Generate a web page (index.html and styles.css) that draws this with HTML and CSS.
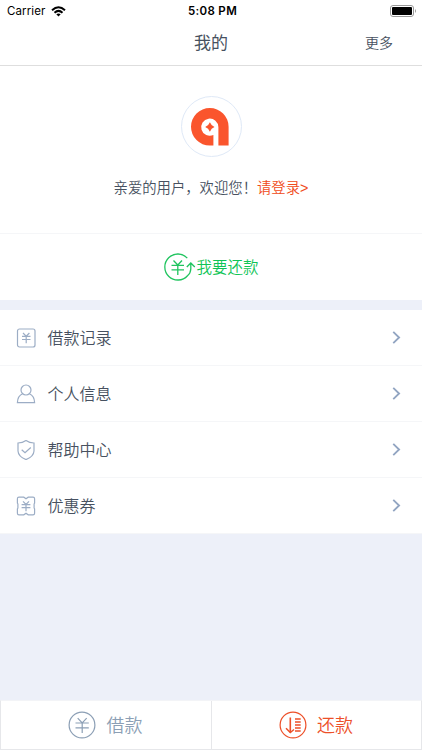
FILE: index.html
```html
<!DOCTYPE html>
<html lang="zh-CN">
<head>
<meta charset="utf-8">
<title>我的</title>
<link rel="stylesheet" href="styles.css">
</head>
<body>
<div class="app">
  <div class="status">
    <div class="carrier"><span>Carrier</span>
      <svg width="15" height="11" viewBox="0 0 15 11" fill="none" stroke="#000" stroke-width="2"><path d="M1 4.2Q7.5-1.6 14 4.2M3.5 6.7Q7.5 3.1 11.5 6.7"/><path d="M5.3 8.3Q7.5 6.6 9.7 8.3L7.5 10.6Z" fill="#000" stroke="none"/></svg>
    </div>
    <time>5:08 PM</time>
    <svg class="battery" width="27" height="12" viewBox="0 0 27 12"><rect x=".5" y=".5" width="23" height="11" rx="2.5" fill="#fff" stroke="#999"/><rect x="2" y="2" width="20" height="8" rx="1" fill="#000"/><path d="M25 4q2 2 0 4z" fill="#999"/></svg>
  </div>
  <header class="nav"><span></span><h1>我的</h1><a class="more">更多</a></header>
  <section class="profile">
    <div class="avatar">
      <svg width="38" height="38" viewBox="0 0 38 38"><path d="M18.8 0A18.8 18.8 0 0 0 18.8 37.6H22.4V27A8.6 8.6 0 1 1 27.4 19.2V37.6H37.6V18.8A18.8 18.8 0 0 0 18.8 0Z" fill="#fa552d"/><path d="M18.9 14.2Q20.2 17.6 23.5 19Q20.2 20.3 18.9 23.8Q17.6 20.3 14.2 19Q17.6 17.6 18.9 14.2Z" fill="#fa552d"/></svg>
    </div>
    <p class="greeting">亲爱的用户，欢迎您！<a>请登录&gt;</a></p>
  </section>
  <section class="repay">
    <svg width="32" height="28" viewBox="0 0 32 28" fill="none" stroke="#20c45f" stroke-width="1.3"><path d="M23.3 5.1A13 13 0 1 0 23.5 22.7Q26.5 20.5 26.8 16V10M22.8 14L26.8 10L30.8 14"/><path d="M9.5 7.5L13.8 12L18 7.5M7.5 12.3H20M7.5 16.8H20M13.8 12V22"/></svg>
    <span>我要还款</span>
  </section>
  <nav class="menu">
    <a class="row">
      <svg class="icon" viewBox="0 0 20 20"><rect x="1.5" y="1" width="17.5" height="18" rx="2"/><path d="M7 5L10.2 8.2L13.4 5M6 8.4H14.5M6 11.5H14.5M10.2 8.2V15.2"/></svg>
      <span>借款记录</span><svg class="chevron" viewBox="0 0 8 12"><path d="M1 .8L6.4 6L1 11.2"/></svg></a>
    <a class="row">
      <svg class="icon" viewBox="0 0 20 20"><circle cx="10" cy="6" r="5"/><path d="M6.6 9.7C3.4 11 1.6 14 1.4 18.6H18.6C18.4 14 16.6 11 13.4 9.7"/></svg>
      <span>个人信息</span><svg class="chevron" viewBox="0 0 8 12"><path d="M1 .8L6.4 6L1 11.2"/></svg></a>
    <a class="row">
      <svg class="icon" viewBox="0 0 20 20"><path d="M10 .5Q13.5 3 18 3V11Q17.7 16.5 10 19.6Q2.3 16.5 2 11V3Q6.5 3 10 .5ZM5.7 9.8L9 12.8L14.8 7.5"/></svg>
      <span>帮助中心</span><svg class="chevron" viewBox="0 0 8 12"><path d="M1 .8L6.4 6L1 11.2"/></svg></a>
    <a class="row">
      <svg class="icon" viewBox="0 0 20 20"><path d="M3 1.2H7.8L10 2.8L12.2 1.2H17Q18.6 1.2 18.6 2.8V7.2L18.1 8V12L18.6 12.8V17.2Q18.6 18.8 17 18.8H12.2L10 17.2L7.8 18.8H3Q1.4 18.8 1.4 17.2V12.8L1.9 12V8L1.4 7.2V2.8Q1.4 1.2 3 1.2Z"/><path d="M7 5.3L10 8.3L13 5.3M5.6 8.6H14.4M5.6 11.6H14.4M10 8.3V15.2"/></svg>
      <span>优惠券</span><svg class="chevron" viewBox="0 0 8 12"><path d="M1 .8L6.4 6L1 11.2"/></svg></a>
  </nav>
  <footer class="tabs">
    <a class="tab"><svg viewBox="0 0 28 28"><circle cx="14" cy="14" r="12.9"/><path d="M9.7 7.2L14.2 11.8L18.7 7.2M7.5 12H20.8M7.5 16.8H20.8M14.2 11.8V22"/></svg><span>借款</span></a>
    <a class="tab active"><svg viewBox="0 0 28 28"><circle cx="14" cy="14" r="12.9"/><path d="M11.3 6.5V21.5" stroke-width="1.6"/><path d="M7 17.3L11.3 21.5L15 18.5M16 8H21.7M16 11H21.7M16 14H21.7M16 17H21.7M16 20H21.7" stroke-width="1.5"/></svg><span>还款</span></a>
  </footer>
</div>
</body>
</html>
```
FILE: styles.css
```css
* { box-sizing: border-box; }
body { margin: 0; background: #edf0f9; color: #475160; font-family: "Liberation Sans", "Noto Sans CJK SC", sans-serif; font-weight: 350; }
.app { width: 422px; height: 750px; display: flex; flex-direction: column; }
svg { display: block; flex: none; }
.status { height: 22px; padding: 0 5px 0 7px; background: #fff; color: #000; display: grid; grid-template-columns: 1fr auto 1fr; align-items: center; font: 11.5px/22px Inter, sans-serif; }
.carrier { display: flex; align-items: center; gap: 6px; letter-spacing: .1px; }
.status time { font-weight: 600; letter-spacing: .35px; padding-left: 1px; }
.battery { justify-self: end; }
.nav { height: 44px; padding: 0 29px; background: #fff; border-bottom: 1px solid #dedede; display: grid; grid-template-columns: 1fr auto 1fr; align-items: center; }
.nav h1 { margin: 0; font-size: 17px; font-weight: 400; line-height: 24px; }
.more { justify-self: end; font-size: 14px; padding-bottom: 3px; }
.profile { height: 168px; padding-top: 30px; background: #fff; border-bottom: 1px solid #f5f6f8; display: flex; flex-direction: column; align-items: center; }
.avatar { width: 61px; height: 61px; border: 1px solid #dfe9f7; border-radius: 50%; display: flex; align-items: center; justify-content: center; margin-bottom: 19px; padding-right: 3px; }
.greeting { margin: 0; font-size: 14.35px; line-height: 24px; white-space: nowrap; }
.greeting a { color: #f04b20; }
.repay { height: 66px; background: #fff; display: flex; align-items: center; justify-content: center; padding-left: 1px; color: #10c456; font-size: 15.5px; }
.repay span { padding-bottom: 2px; }
.menu { margin-top: 10px; background: #fff; }
.row { height: 56px; padding: 0 21px 0 16px; border-bottom: 1px solid #f5f6f8; display: flex; align-items: center; font-size: 16px; }
.row span { flex: 1; margin-left: 11.5px; padding-bottom: 2px; }
.icon { width: 20px; height: 20px; fill: none; stroke: #9cadc5; stroke-width: 1.2; }
.chevron { width: 9px; height: 13px; fill: none; stroke: #92a5c2; stroke-width: 1.7; }
.tabs { height: 50px; margin-top: auto; background: #fff; border: 1px solid #e6e7ea; border-top-color: #f3f4f7; display: grid; grid-template-columns: 1fr 1fr; }
.tab { display: flex; align-items: center; justify-content: center; gap: 10.5px; padding-right: 1.5px; color: #8c9fb5; font-size: 18px; }
.tab span { padding-bottom: 2px; }
.tab + .tab { border-left: 1px solid #e6e7ea; }
.tab svg { width: 28px; height: 28px; fill: none; stroke: currentColor; stroke-width: 1.2; }
.tab.active { color: #ed5029; }
```
